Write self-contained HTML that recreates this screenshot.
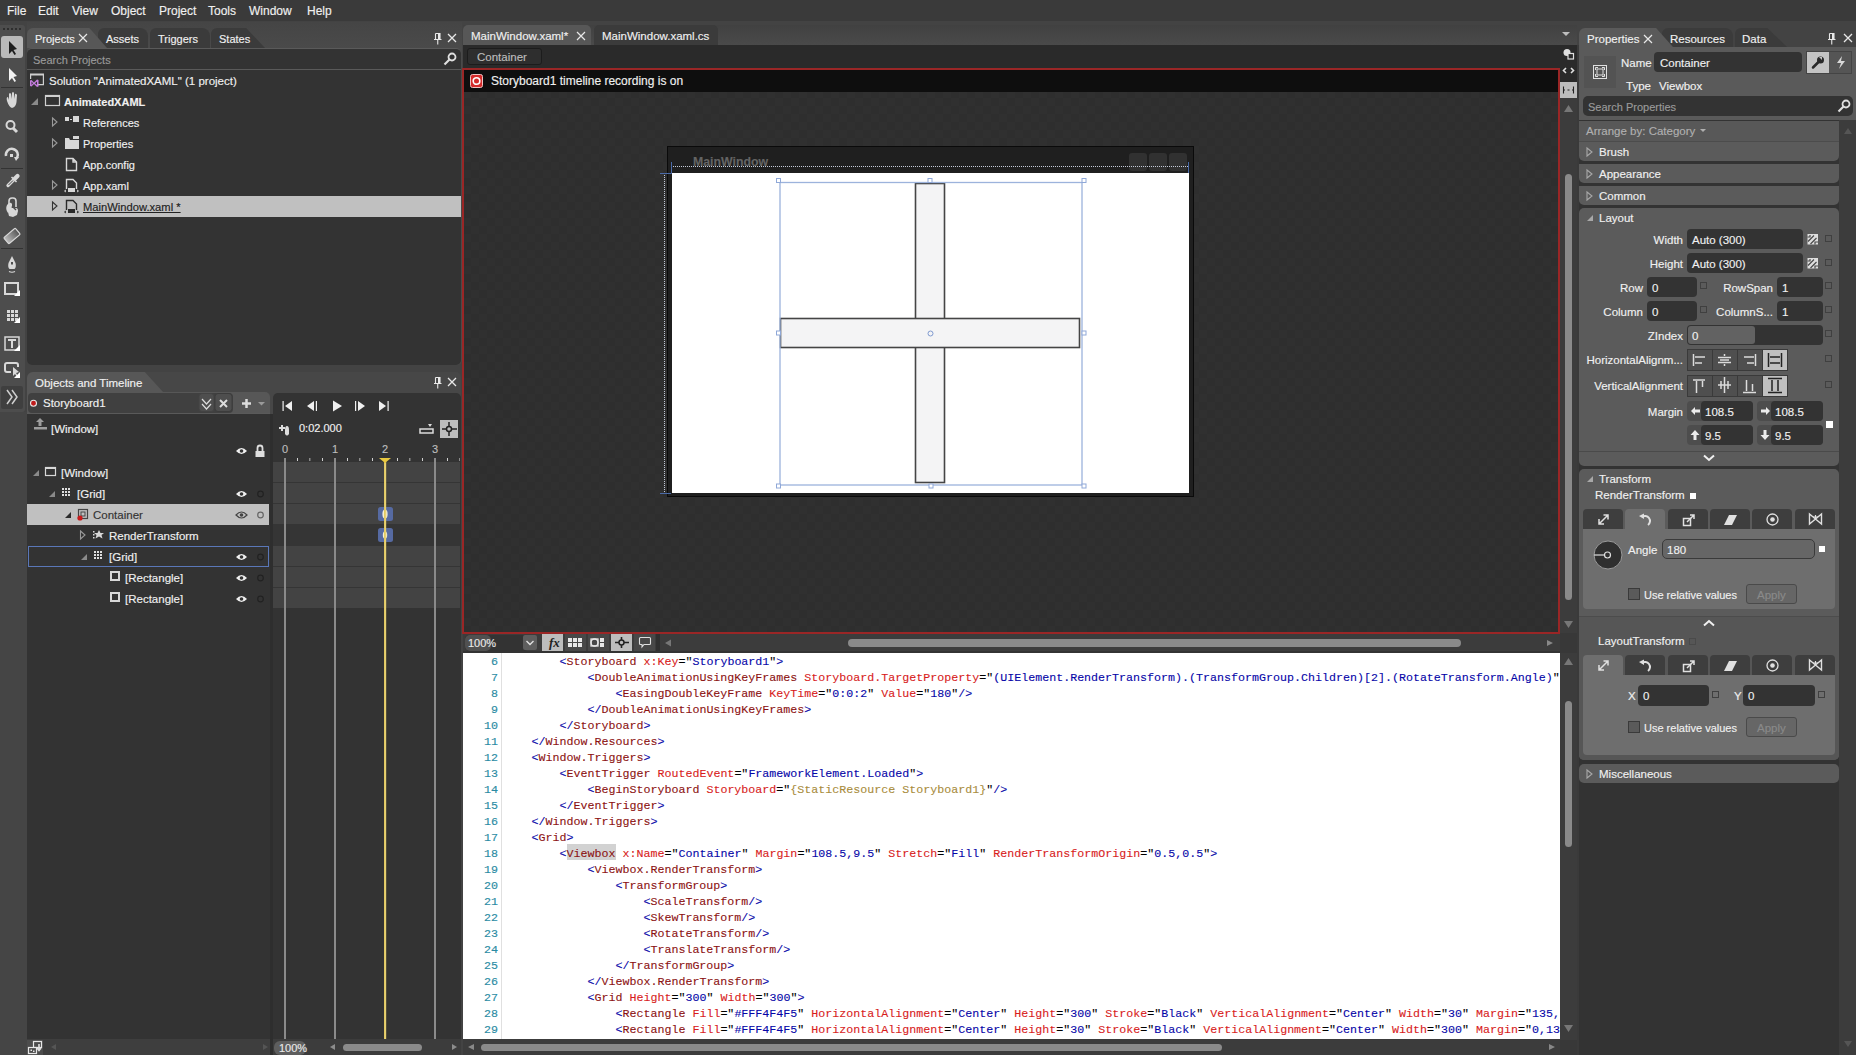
<!DOCTYPE html>
<html><head><meta charset="utf-8">
<style>
*{box-sizing:border-box;margin:0;padding:0}
html,body{width:1856px;height:1055px;overflow:hidden}
body{background:#434343;font-family:"Liberation Sans",sans-serif;font-size:11.5px;color:#f0f0f0;position:relative;-webkit-text-stroke:0.15px}
.a{position:absolute}
.t{position:absolute;white-space:nowrap;line-height:14px}
svg{position:absolute;overflow:visible}
.tab{position:absolute;height:20px;background:#3a3a3a;border-radius:6px 0 0 0}
.code{position:absolute;left:503.5px;font-family:"Liberation Mono",monospace;font-size:11.667px;line-height:16px;white-space:pre;color:#a31515;-webkit-text-stroke:0.1px}
.b{color:#0606a8}.q{color:#000}.r{color:#d81c1c}.v{color:#0000ff}.k{color:#8c1212}.y{color:#a88c3c}
.ln{position:absolute;left:463px;width:35px;text-align:right;font-family:"Liberation Mono",monospace;font-size:11.667px;line-height:16px;color:#2a8ba3;-webkit-text-stroke:0.15px}
</style></head><body>
<!-- ============ MENU ============ -->
<div class="a" style="left:0;top:0;width:1856px;height:21px;background:#3a3a3a"></div>
<div class="t" style="left:7px;top:4px;font-size:12px">File</div>
<div class="t" style="left:38px;top:4px;font-size:12px">Edit</div>
<div class="t" style="left:72px;top:4px;font-size:12px">View</div>
<div class="t" style="left:111px;top:4px;font-size:12px">Object</div>
<div class="t" style="left:159px;top:4px;font-size:12px">Project</div>
<div class="t" style="left:208px;top:4px;font-size:12px">Tools</div>
<div class="t" style="left:249px;top:4px;font-size:12px">Window</div>
<div class="t" style="left:307px;top:4px;font-size:12px">Help</div>

<!-- ============ LEFT TOOLBAR ============ -->
<div class="a" style="left:0;top:25px;width:25px;height:387px;background:#4d4d4d;border-radius:0 3px 3px 0"></div>
<div class="a" style="left:0;top:412px;width:27px;height:643px;background:#454545"></div>
<svg style="left:0;top:25px" width="25" height="387"><defs><linearGradient id="erg" x1="0" x2="1"><stop offset="0" stop-color="#bdbdbd"/><stop offset="1" stop-color="#555"/></linearGradient></defs>
 <g fill="#2e2e2e"><rect x="3" y="3" width="2" height="2"/><rect x="7" y="3" width="2" height="2"/><rect x="11" y="3" width="2" height="2"/><rect x="15" y="3" width="2" height="2"/><rect x="19" y="3" width="2" height="2"/></g>
 <rect x="1" y="11" width="22" height="22" rx="3" fill="#b9b9b9"/>
 <path d="M9 16 L9 29 L12 26 L14.5 30 L16 29 L13.5 25 L17 24 Z" fill="#1e1e1e"/>
 <path d="M9 43 L9 56 L12 53 L14.5 57 L16 56 L13.5 52 L17 51 Z" fill="#f2f2f2"/>
 <rect x="1" y="62" width="22" height="1" fill="#333"/>
 <path d="M7 76 Q6 72 8 72 L9 75 L9 69 Q10 67 11 69 L11.5 74 L12 68 Q13 66 14 68 L14 74 L15 69 Q16 68 17 70 L16.5 77 Q16 82 12 83 Q9 82 7 76Z" fill="#d8d8d8"/>
 <circle cx="10.5" cy="100" r="4" fill="none" stroke="#d8d8d8" stroke-width="2"/><path d="M13 103 L17 107" stroke="#d8d8d8" stroke-width="3"/>
 <path d="M6 131 A6 6 0 1 1 17 133" fill="none" stroke="#d8d8d8" stroke-width="2.5"/><path d="M14 132 L19 132 L16 136Z" fill="#d8d8d8"/><rect x="10" y="129" width="3" height="3" fill="#d8d8d8"/>
 <rect x="1" y="143" width="22" height="1" fill="#333"/>
 <path d="M8 160.5 L13.5 155" stroke="#d8d8d8" stroke-width="3.2" stroke-linecap="round"/><path d="M8.5 160 L13 155.5" stroke="#4d4d4d" stroke-width="1"/>
 <path d="M12.5 153 L16 149.5 Q17.5 148 19 149.5 Q20.5 151 19 152.5 L15.5 156Z" fill="#d8d8d8"/><path d="M11.5 152 L16.5 157" stroke="#d8d8d8" stroke-width="1.6"/>
<g transform="translate(0,2)"> <path d="M8 186 Q5 182 7 178 L9 176 Q11 175 12 177 L12 180" fill="#d8d8d8"/><path d="M9 180 L9 174 Q9 171 12 171 L13 171 Q16 171 16 174 L16 180" fill="none" stroke="#d8d8d8" stroke-width="1.6"/><path d="M7 181 L16 181 Q18 181 18 184 L17 188 L13 190 L9 189Z" fill="#d8d8d8"/><path d="M12 179 L16 183" stroke="#4d4d4d" stroke-width="1.4"/></g>
 <g transform="rotate(-40 12 211)"><rect x="4.5" y="207" width="15" height="8" rx="1" fill="url(#erg)" stroke="#d8d8d8" stroke-width="1.2"/></g>
 <rect x="1" y="223" width="22" height="1" fill="#333"/>
 <path d="M12 231 L15.5 238 Q16.5 242 14.5 244 L9.5 244 Q7.5 242 8.5 238Z" fill="#d8d8d8"/><rect x="11" y="237" width="2" height="2.5" fill="#4d4d4d"/><path d="M9 246.5 Q12 248 15 246.5" stroke="#d8d8d8" fill="none" stroke-width="1.2"/>
 <rect x="5" y="258" width="13" height="11" fill="none" stroke="#d8d8d8" stroke-width="2"/><path d="M20 271 L20 265 L14 271Z" fill="#fff"/>
 <g fill="#d8d8d8"><rect x="7" y="285" width="3" height="3"/><rect x="11" y="285" width="3" height="3"/><rect x="15" y="285" width="3" height="3"/><rect x="7" y="289" width="3" height="3"/><rect x="11" y="289" width="3" height="3"/><rect x="15" y="289" width="3" height="3"/><rect x="7" y="293" width="3" height="3"/><rect x="11" y="293" width="3" height="3"/><rect x="15" y="293" width="3" height="3"/></g><path d="M20 298 L20 292 L14 298Z" fill="#fff"/>
 <rect x="5" y="312" width="14" height="13" fill="none" stroke="#d8d8d8" stroke-width="1.5"/><path d="M8 315 L16 315 M12 315 L12 323" stroke="#d8d8d8" stroke-width="2"/><path d="M20 326 L20 320 L14 326Z" fill="#fff"/>
 <path d="M11 347 L7 347 Q5 347 5 345 L5 340 Q5 338 7 338 L16 338 Q18 338 18 340 L18 342" fill="none" stroke="#d8d8d8" stroke-width="2"/><path d="M13 342 L13 351 L15 349 L17 352 L18 351 L16 348 L19 347Z" fill="#d8d8d8"/><path d="M20 353 L20 347 L14 353Z" fill="#fff"/>
 <rect x="1" y="361" width="22" height="23" rx="2" fill="#3f3f3f"/>
 <path d="M7 365 L12 372 L7 379 M12 365 L17 372 L12 379" fill="none" stroke="#cfcfcf" stroke-width="1.5"/>
</svg>

<!-- ============ PROJECTS PANEL ============ -->
<div class="a" style="left:27px;top:22px;width:435px;height:343px;background:linear-gradient(#454545,#4a4a4a 26px);border-radius:0 0 5px 5px"></div>
<!-- tabs -->
<div class="a" style="left:98px;top:28px;width:50px;height:20px;background:#3b3b3b;border-radius:6px 8px 0 0"></div>
<div class="a" style="left:150px;top:28px;width:60px;height:20px;background:#3b3b3b;border-radius:6px 8px 0 0"></div>
<div class="a" style="left:211px;top:28px;width:54px;height:20px;background:#3b3b3b;border-radius:6px 0 0 0;clip-path:polygon(0 0,65% 0,100% 100%,0 100%)"></div>
<div class="a" style="left:27px;top:28px;width:80px;height:20px;background:#575757;border-radius:6px 0 0 0;clip-path:polygon(0 0,78% 0,100% 100%,0 100%)"></div>
<div class="t" style="left:35px;top:32px;font-size:11px">Projects</div>
<svg style="left:78px;top:33px" width="10" height="10"><path d="M1 1 L9 9 M9 1 L1 9" stroke="#e8e8e8" stroke-width="1.2"/></svg>
<div class="t" style="left:106px;top:32px;font-size:11px">Assets</div>
<div class="t" style="left:158px;top:32px;font-size:11px">Triggers</div>
<div class="t" style="left:219px;top:32px;font-size:11px">States</div>
<svg style="left:433px;top:32px" width="12" height="13"><path d="M2.5 1.5 L7 1.5 L7 7.5 M2.5 1.5 L2.5 7.5 M1 7.5 L8.5 7.5 M4.75 8 L4.75 12.5" fill="none" stroke="#e8e8e8" stroke-width="1.1"/><rect x="5" y="2" width="2" height="5.5" fill="#e8e8e8"/></svg>
<svg style="left:447px;top:33px" width="10" height="10"><path d="M1 1 L9 9 M9 1 L1 9" stroke="#e8e8e8" stroke-width="1.3"/></svg>
<!-- search -->
<div class="a" style="left:27px;top:48px;width:434px;height:22px;background:#333;border-top:1px solid #5a5a5a;border-bottom:1px solid #5a5a5a;border-radius:5px 5px 0 0"></div>
<div class="t" style="left:33px;top:53px;color:#9a9a9a;font-size:11px">Search Projects</div>
<svg style="left:443px;top:52px" width="14" height="14"><circle cx="9" cy="5" r="3.5" fill="none" stroke="#e0e0e0" stroke-width="1.8"/><path d="M6.5 7.5 L1.5 12.5" stroke="#e0e0e0" stroke-width="2.2"/></svg>
<!-- tree -->
<div class="a" style="left:27px;top:70px;width:434px;height:295px;background:#333;border-radius:0 0 5px 5px"></div>
<div class="a" style="left:27px;top:196px;width:434px;height:21px;background:#c0c0c0"></div>
<svg style="left:28px;top:70px" width="60" height="150">
 <rect x="2" y="3.5" width="14" height="2" fill="#cfcfcf"/><path d="M2.6 4 L2.6 9 M15.4 4 L15.4 14.6 L10 14.6" fill="none" stroke="#cfcfcf" stroke-width="1.2"/>
 <path d="M2 10.5 L3.5 10 L6 12.5 L9 9.5 L10.5 10 L10.5 16.5 L9 17 L6 14 L3.5 16.5 L2 16Z M3.5 11.5 L3.5 15 L5 13.2Z M9 11.5 L7 13.2 L9 15Z" fill="#c77ee0" fill-rule="evenodd"/>
 <path d="M3 35 L10 28 L10 35Z" fill="#8a8a8a"/>
 <rect x="17.5" y="25.5" width="14" height="10" fill="none" stroke="#d0d0d0" stroke-width="1.2"/><rect x="17" y="25" width="15" height="2" fill="#d0d0d0"/>
 <path d="M24.5 48 L29 52 L24.5 56Z" fill="none" stroke="#9a9a9a" stroke-width="1.1"/>
 <rect x="37" y="47" width="4" height="4" fill="#d8d8d8"/><rect x="42" y="49" width="2" height="1" fill="#d8d8d8"/><rect x="45" y="46" width="6" height="6" fill="#d8d8d8"/>
 <path d="M24.5 69 L29 73 L24.5 77Z" fill="none" stroke="#9a9a9a" stroke-width="1.1"/>
 <path d="M37 68 L41 68 L42 70 L51 70 L51 79 L37 79Z" fill="#d8d8d8"/><path d="M45 66 L51 66 L51 69 L45 69Z" fill="#d8d8d8"/>
 <path d="M38.5 88.5 L45 88.5 L48.5 92 L48.5 100.5 L38.5 100.5Z M45 88.5 L45 92 L48.5 92" fill="none" stroke="#d8d8d8" stroke-width="1.4"/>
 <path d="M24.5 111 L29 115 L24.5 119Z" fill="none" stroke="#9a9a9a" stroke-width="1.1"/>
 <path d="M38.5 119 L38.5 109.5 L45 109.5 L48.5 113 L48.5 119" fill="none" stroke="#d8d8d8" stroke-width="1.4"/><path d="M40 118 L47 118 L47 122 L40 122Z" fill="#d8d8d8"/><path d="M38 120 L36.5 121 L38 122 M49 120 L50.5 121 L49 122" stroke="#d8d8d8" fill="none"/>
 <path d="M24.5 132 L29 136 L24.5 140Z" fill="none" stroke="#333" stroke-width="1.1"/>
 <path d="M38.5 140 L38.5 130.5 L45 130.5 L48.5 134 L48.5 140" fill="none" stroke="#2a2a2a" stroke-width="1.4"/><path d="M40 139 L47 139 L47 143 L40 143Z" fill="#2a2a2a"/><path d="M38 141 L36.5 142 L38 143 M49 141 L50.5 142 L49 143" stroke="#2a2a2a" fill="none"/>
</svg>
<div class="t" style="left:49px;top:74px">Solution "AnimatedXAML" (1 project)</div>
<div class="t" style="left:64px;top:95px;font-weight:bold;font-size:11px">AnimatedXAML</div>
<div class="t" style="left:83px;top:116px;font-size:11px">References</div>
<div class="t" style="left:83px;top:137px;font-size:11px">Properties</div>
<div class="t" style="left:83px;top:158px;font-size:11px">App.config</div>
<div class="t" style="left:83px;top:179px;font-size:11px">App.xaml</div>
<div class="t" style="left:83px;top:200px;color:#222;text-decoration:underline;font-size:11.2px">MainWindow.xaml *</div>

<!-- ============ OBJECTS AND TIMELINE ============ -->
<div class="a" style="left:27px;top:372px;width:434px;height:683px;background:#474747;border-radius:5px 5px 0 0"></div>
<div class="a" style="left:27px;top:372px;width:137px;height:21px;background:#575757;border-radius:6px 0 0 0;clip-path:polygon(0 0,86% 0,100% 100%,0 100%)"></div>
<div class="t" style="left:35px;top:376px">Objects and Timeline</div>
<svg style="left:433px;top:376px" width="12" height="13"><path d="M2.5 1.5 L7 1.5 L7 7.5 M2.5 1.5 L2.5 7.5 M1 7.5 L8.5 7.5 M4.75 8 L4.75 12.5" fill="none" stroke="#e8e8e8" stroke-width="1.1"/><rect x="5" y="2" width="2" height="5.5" fill="#e8e8e8"/></svg>
<svg style="left:447px;top:377px" width="10" height="10"><path d="M1 1 L9 9 M9 1 L1 9" stroke="#e8e8e8" stroke-width="1.3"/></svg>
<!-- storyboard row -->
<div class="a" style="left:27px;top:392px;width:243px;height:22px;background:#575757;border-radius:0 5px 0 0"></div>
<div class="a" style="left:28px;top:393px;width:205px;height:20px;background:#404040;border-radius:4px"></div>
<svg style="left:28px;top:396px" width="242" height="16">
 <circle cx="5.5" cy="7.3" r="3" fill="#c01c1c" stroke="#e8e8e8" stroke-width="1.1"/>
 <rect x="171" y="-2.5" width="15" height="18" rx="3" fill="#4e4e4e" stroke="#434343" stroke-width="1"/>
 <path d="M174 3 L178.5 8 L183 3 M174 8 L178.5 13 L183 8" fill="none" stroke="#dcdcdc" stroke-width="1.2"/>
 <rect x="187" y="-2.5" width="17" height="18" rx="3" fill="#4e4e4e" stroke="#3c3c3c" stroke-width="1"/>
 <path d="M192 4 L199 11 M199 4 L192 11" stroke="#dcdcdc" stroke-width="2"/>
 <path d="M214 7.5 L223 7.5 M218.5 3 L218.5 12" stroke="#dcdcdc" stroke-width="2.5"/>
 <path d="M230 6 L237 6 L233.5 9.5Z" fill="#9a9a9a"/>
</svg>
<div class="t" style="left:43px;top:396px">Storyboard1</div>
<!-- tree area -->
<div class="a" style="left:27px;top:413px;width:243px;height:642px;background:#333"></div>
<div class="a" style="left:270px;top:414px;width:3px;height:641px;background:#2e2e2e"></div>
<div class="a" style="left:27px;top:413px;width:243px;height:1px;background:#5a5a5a"></div>
<div class="a" style="left:27px;top:504px;width:242px;height:21px;background:#c0c0c0"></div>
<div class="a" style="left:28px;top:546px;width:241px;height:21px;border:1px solid #5a77b8"></div>
<div class="t" style="left:51px;top:422px">[Window]</div>
<div class="t" style="left:61px;top:466px">[Window]</div>
<div class="t" style="left:77px;top:487px">[Grid]</div>
<div class="t" style="left:93px;top:508px;color:#333">Container</div>
<div class="t" style="left:109px;top:529px">RenderTransform</div>
<div class="t" style="left:109px;top:550px">[Grid]</div>
<div class="t" style="left:125px;top:571px">[Rectangle]</div>
<div class="t" style="left:125px;top:592px">[Rectangle]</div>
<svg style="left:27px;top:413px" width="243" height="200">
 <path d="M13 5 L17 9 L14.5 9 L14.5 13 L11.5 13 L11.5 9 L9 9Z" fill="#9d9d9d"/><rect x="7" y="14" width="13" height="2.5" fill="#9d9d9d"/>
 <!-- eye + lock header -->
 <path d="M209 38 Q214.5 32 220 38 Q214.5 44 209 38Z" fill="#f0f0f0"/><circle cx="214.5" cy="38" r="1.8" fill="#333"/>
 <path d="M230.5 38 L230.5 35 Q230.5 32.5 233 32.5 Q235.5 32.5 235.5 35 L235.5 38" fill="none" stroke="#dedede" stroke-width="1.8"/><rect x="228.5" y="38" width="9" height="6" fill="#dedede"/>
 <!-- Window -->
 <path d="M6 63 L12 57 L12 63Z" fill="#8a8a8a"/>
 <rect x="18.5" y="54.5" width="10" height="8" fill="none" stroke="#d8d8d8" stroke-width="1.2"/><rect x="18" y="54" width="11" height="2" fill="#d8d8d8"/>
 <!-- Grid -->
 <path d="M22 84 L28 78 L28 84Z" fill="#8a8a8a"/>
 <g fill="#e0e0e0"><rect x="35" y="75" width="2" height="2"/><rect x="38" y="75" width="2" height="2"/><rect x="41" y="75" width="2" height="2"/><rect x="35" y="78" width="2" height="2"/><rect x="38" y="78" width="2" height="2"/><rect x="41" y="78" width="2" height="2"/><rect x="35" y="81" width="2" height="2"/><rect x="38" y="81" width="2" height="2"/><rect x="41" y="81" width="2" height="2"/></g>
 <path d="M209 81 Q214.5 75 220 81 Q214.5 87 209 81Z" fill="#f0f0f0"/><circle cx="214.5" cy="81" r="1.8" fill="#333"/>
 <circle cx="233.5" cy="81" r="2.8" fill="none" stroke="#222" stroke-width="1.2"/>
 <!-- Container -->
 <path d="M38 105 L44 99 L44 105Z" fill="#2a2a2a"/>
 <rect x="51.5" y="96.5" width="9" height="9" fill="none" stroke="#444" stroke-width="1.2"/><rect x="54" y="99" width="4" height="4" fill="none" stroke="#444"/>
 <circle cx="53" cy="105" r="2.6" fill="#c81a1a"/>
 <path d="M209 102 Q214.5 96 220 102 Q214.5 108 209 102Z" fill="none" stroke="#444" stroke-width="1.2"/><circle cx="214.5" cy="102" r="1.8" fill="#444"/>
 <circle cx="233.5" cy="102" r="2.8" fill="none" stroke="#666" stroke-width="1.2"/>
 <!-- RenderTransform -->
 <path d="M53.5 118 L58 122 L53.5 126Z" fill="none" stroke="#9a9a9a" stroke-width="1.1"/>
 <path d="M72 117 L73.5 120 L77 120 L74.5 122 L75.5 125.5 L72 123.5 L68.5 125.5 L69.5 122 L67 120 L70.5 120Z" fill="#d8d8d8"/><g fill="#d8d8d8"><rect x="66" y="118" width="1.5" height="1.5"/><rect x="66" y="121" width="1.5" height="1.5"/><rect x="66" y="124" width="1.5" height="1.5"/></g>
 <!-- Grid2 -->
 <path d="M54 147 L60 141 L60 147Z" fill="#8a8a8a"/>
 <g fill="#e0e0e0"><rect x="67" y="138" width="2" height="2"/><rect x="70" y="138" width="2" height="2"/><rect x="73" y="138" width="2" height="2"/><rect x="67" y="141" width="2" height="2"/><rect x="70" y="141" width="2" height="2"/><rect x="73" y="141" width="2" height="2"/><rect x="67" y="144" width="2" height="2"/><rect x="70" y="144" width="2" height="2"/><rect x="73" y="144" width="2" height="2"/></g>
 <path d="M209 144 Q214.5 138 220 144 Q214.5 150 209 144Z" fill="#f0f0f0"/><circle cx="214.5" cy="144" r="1.8" fill="#333"/>
 <circle cx="233.5" cy="144" r="2.8" fill="none" stroke="#222" stroke-width="1.2"/>
 <!-- Rect -->
 <rect x="84" y="159" width="8" height="8" fill="none" stroke="#d8d8d8" stroke-width="2"/>
 <path d="M209 165 Q214.5 159 220 165 Q214.5 171 209 165Z" fill="#f0f0f0"/><circle cx="214.5" cy="165" r="1.8" fill="#333"/>
 <circle cx="233.5" cy="165" r="2.8" fill="none" stroke="#222" stroke-width="1.2"/>
 <rect x="84" y="180" width="8" height="8" fill="none" stroke="#d8d8d8" stroke-width="2"/>
 <path d="M209 186 Q214.5 180 220 186 Q214.5 192 209 186Z" fill="#f0f0f0"/><circle cx="214.5" cy="186" r="1.8" fill="#333"/>
 <circle cx="233.5" cy="186" r="2.8" fill="none" stroke="#222" stroke-width="1.2"/>
</svg>
<!-- timeline -->
<div class="a" style="left:273px;top:393px;width:188px;height:662px;background:#333;border-radius:5px 5px 0 0"></div>
<svg style="left:273px;top:393px" width="188" height="662">
 <rect x="9.5" y="8" width="1.2" height="10" fill="#f0f0f0"/><path d="M19 8 L12 13 L19 18Z" fill="#f0f0f0"/>
 <path d="M34 13 L41 8 L41 18Z" fill="#f0f0f0"/><rect x="42.8" y="8" width="1.2" height="10" fill="#f0f0f0"/>
 <path d="M60 7.5 L69 13 L60 18.5Z" fill="#f0f0f0"/>
 <rect x="82" y="8" width="1.2" height="10" fill="#f0f0f0"/><path d="M85 8 L92 13 L85 18Z" fill="#f0f0f0"/>
 <path d="M106 8 L113 13 L106 18Z" fill="#f0f0f0"/><rect x="114.5" y="8" width="1.2" height="10" fill="#f0f0f0"/>
 <path d="M6 35 L12 35 M9 32 L9 38" stroke="#dcdcdc" stroke-width="2"/><path d="M12 37 Q12 33 14 33 Q16 33 16 37 L16 41 Q14 44 12 41Z" fill="#dcdcdc"/>
 <rect x="147" y="36" width="13" height="4" fill="none" stroke="#dcdcdc" stroke-width="1.5"/><path d="M155 31 L159 31 L157 34Z" fill="#dcdcdc"/>
 <rect x="167" y="27" width="18" height="18" fill="#bdbdbd"/>
 <circle cx="176" cy="36" r="2.5" fill="none" stroke="#222" stroke-width="1.5"/><path d="M176 29 L176 33.5 M176 38.5 L176 43 M169 36 L173.5 36 M178.5 36 L184 36" stroke="#222" stroke-width="1.5"/>
</svg>
<div class="t" style="left:299px;top:421px;font-size:11px">0:02.000</div>
<div class="t" style="left:282px;top:442px;color:#bdbdbd;font-size:11px">0</div>
<div class="t" style="left:332px;top:442px;color:#bdbdbd;font-size:11px">1</div>
<div class="t" style="left:382px;top:442px;color:#bdbdbd;font-size:11px">2</div>
<div class="t" style="left:432px;top:442px;color:#bdbdbd;font-size:11px">3</div>
<!-- rows -->
<div class="a" style="left:273px;top:462px;width:187px;height:146px;background:repeating-linear-gradient(#434343 0 20px,#353535 20px 21px)"></div>
<div class="a" style="left:273px;top:525px;width:187px;height:21px;background:#353535"></div>
<svg style="left:273px;top:455px" width="188" height="600">
 <g fill="#d0d0d0"><rect x="24" y="3" width="1" height="3"/><rect x="49" y="3" width="1" height="3"/><rect x="74" y="3" width="1" height="3"/><rect x="99" y="3" width="1" height="3"/><rect x="124" y="3" width="1" height="3"/><rect x="149" y="3" width="1" height="3"/><rect x="174" y="3" width="1" height="3"/></g>
 <g fill="#8a8a8a"><rect x="36" y="3" width="1.5" height="3"/><rect x="86" y="3" width="1.5" height="3"/><rect x="136" y="3" width="1.5" height="3"/><rect x="186" y="3" width="1" height="3"/></g>
 <rect x="11" y="3" width="2" height="597" fill="#8a8a8a"/>
 <rect x="61" y="3" width="2" height="597" fill="#8a8a8a"/>
 <rect x="161" y="3" width="2" height="597" fill="#8a8a8a"/>
 <rect x="105" y="52" width="15" height="14" rx="2.5" fill="#566aa2"/><ellipse cx="112" cy="59" rx="2.6" ry="4.6" fill="#f4f0d8"/>
 <rect x="105" y="73" width="15" height="14" rx="2.5" fill="#566aa2"/><ellipse cx="112" cy="80" rx="2.2" ry="3.8" fill="#f4f0d8"/>
 <rect x="111" y="5" width="2.2" height="595" fill="#dcbf48"/><rect x="111.7" y="8" width="0.8" height="592" fill="#f0e2a0"/>
 <path d="M106 3 L118 3 L112 8Z" fill="#e8c840"/>
</svg>
<!-- bottom scrollbars left -->
<div class="a" style="left:27px;top:1039px;width:243px;height:16px;background:#3e3e3e"></div>
<div class="a" style="left:273px;top:1039px;width:188px;height:16px;background:#3c3c3c"></div>
<svg style="left:27px;top:1039px" width="434" height="16">
 <rect x="0" y="1" width="16" height="15" fill="#4d4d4d"/>
 <rect x="6.5" y="2.5" width="8" height="6" fill="none" stroke="#e8e8e8" stroke-width="1.2"/><rect x="1.5" y="8.5" width="8" height="6" fill="#4d4d4d" stroke="#e8e8e8" stroke-width="1.2"/><rect x="3.5" y="10.5" width="1.5" height="1.5" fill="#e8e8e8"/><rect x="6" y="11.5" width="1.5" height="1.5" fill="#e8e8e8"/><path d="M12 5 L12 11 M10 9 L12 11.5 L14 9" stroke="#e0e0e0" fill="none" stroke-width="1.6"/>
 <path d="M24 8 L29 5 L29 11Z" fill="#555"/>
 <path d="M236 5 L241 8 L236 11Z" fill="#555"/>
 <rect x="247" y="2" width="32" height="14" rx="6" fill="#5e5e5e"/>
 <path d="M303 8 L308 5 L308 11Z" fill="#8c8c8c"/>
 <rect x="316" y="5" width="79" height="7" rx="3.5" fill="#8a8a8a"/>
 <path d="M425 5 L430 8 L425 11Z" fill="#8c8c8c"/>
</svg>
<div class="t" style="left:279px;top:1041px;font-size:11px;color:#e8e8e8">100%</div>

<!-- ============ DOCUMENT AREA ============ -->
<div class="a" style="left:463px;top:25px;width:1114px;height:20px;background:linear-gradient(#414141,#4a4a4a)"></div>
<div class="a" style="left:463px;top:25px;width:128px;height:20px;background:#575757;border-radius:5px 5px 0 0"></div>
<div class="a" style="left:594px;top:25px;width:124px;height:20px;background:#3b3b3b;border-radius:5px 5px 0 0"></div>
<div class="t" style="left:471px;top:29px">MainWindow.xaml*</div>
<svg style="left:576px;top:31px" width="10" height="10"><path d="M1 1 L9 9 M9 1 L1 9" stroke="#e8e8e8" stroke-width="1.2"/></svg>
<div class="t" style="left:602px;top:29px">MainWindow.xaml.cs</div>
<svg style="left:1561px;top:31px" width="10" height="6"><path d="M1 1 L9 1 L5 5Z" fill="#bdbdbd"/></svg>
<!-- breadcrumb -->
<div class="a" style="left:463px;top:45px;width:1097px;height:23px;background:#2a2a2a"></div>
<div class="a" style="left:467px;top:48px;width:75px;height:17px;background:#2e2e2e;border:1px solid #1c1c1c;border-radius:3px"></div>
<div class="t" style="left:477px;top:50px;color:#bdbdbd">Container</div>
<!-- artboard -->
<div class="a" style="left:462px;top:68px;width:1098px;height:566px;background-color:#2e2e2e;background-image:linear-gradient(45deg,#303030 25%,transparent 25%,transparent 75%,#303030 75%),linear-gradient(45deg,#303030 25%,transparent 25%,transparent 75%,#303030 75%);background-size:16px 16px;background-position:7px 4px,15px 12px;border:2px solid #9a2626"></div>
<div class="a" style="left:464px;top:70px;width:1094px;height:22px;background:#0e0e0e"></div>
<svg style="left:470px;top:74px" width="14" height="14"><rect x="0.5" y="0.5" width="12" height="13" rx="2" fill="#d42a2a" stroke="#f0c0c0" stroke-width="1"/><circle cx="6.5" cy="7" r="3.3" fill="none" stroke="#fff" stroke-width="1.6"/></svg>
<div class="t" style="left:491px;top:74px;font-size:12px">Storyboard1 timeline recording is on</div>
<!-- mock window -->
<div class="a" style="left:667px;top:146px;width:527px;height:351px;background:#1f1f1f;border:1px solid #0a0a0a"></div>
<div class="t" style="left:693px;top:155px;color:#646464;font-weight:bold;font-size:12.3px">MainWindow</div>
<div class="a" style="left:1129px;top:153px;width:18px;height:18px;background:#313131;border-radius:3px"></div>
<div class="a" style="left:1149px;top:153px;width:18px;height:18px;background:#313131;border-radius:3px"></div>
<div class="a" style="left:1169px;top:153px;width:18px;height:18px;background:#313131;border-radius:3px"></div>
<div class="a" style="left:672px;top:173px;width:517px;height:320px;background:#fff"></div>
<svg style="left:655px;top:140px" width="560" height="370">
 <path d="M18 26.5 L534 26.5" stroke="#c4cad8" stroke-width="1" stroke-dasharray="1 1"/>
 <path d="M9.5 35 L9.5 353" stroke="#c4cad8" stroke-width="1" stroke-dasharray="1 1"/>
 <path d="M16.5 22 L16.5 33.5 L5 33.5" fill="none" stroke="#4a6aa8" stroke-width="1"/>
 <path d="M533.5 22 L533.5 33" fill="none" stroke="#4a6aa8" stroke-width="1"/>
 <path d="M5 353.5 L16 353.5" fill="none" stroke="#4a6aa8" stroke-width="1"/>
 <!-- rectangles -->
 <rect x="260.5" y="43.5" width="29" height="299" fill="#f4f4f5" stroke="#454545" stroke-width="1.6"/>
 <rect x="125.5" y="178.5" width="299" height="29" fill="#f4f4f5" stroke="#454545" stroke-width="1.6"/>
 <!-- selection -->
 <rect x="125" y="42.5" width="302" height="302.5" fill="none" stroke="#9cb3dc" stroke-width="1.3"/>
 <g fill="#fff" stroke="#8fa8d8" stroke-width="1"><rect x="121.5" y="38.5" width="4" height="4"/><rect x="273" y="38.5" width="4" height="4"/><rect x="427" y="38.5" width="4" height="4"/>
 <rect x="121.5" y="191" width="4" height="4"/><rect x="427" y="191" width="4" height="4"/>
 <rect x="121.5" y="344" width="4" height="4"/><rect x="274" y="344" width="4" height="4"/><rect x="427" y="344" width="4" height="4"/></g>
 <circle cx="275.5" cy="193.5" r="2.5" fill="none" stroke="#7f9ad0" stroke-width="1"/>
</svg>
<!-- zoom toolbar -->
<div class="a" style="left:463px;top:634px;width:1097px;height:19px;background:#3c3c3c;border-bottom:2px solid #333"></div>
<svg style="left:463px;top:634px" width="1097" height="17">
 <rect x="2" y="1" width="63" height="16" rx="4" fill="#333"/>
 <rect x="2" y="1" width="26" height="16" rx="5" fill="#505050"/>
 <rect x="60" y="1" width="14" height="15" rx="2" fill="#5e5e5e"/><path d="M63.5 7 L67 10.5 L70.5 7" fill="none" stroke="#e0e0e0" stroke-width="1.4"/>
 <rect x="79" y="0" width="21" height="17" fill="#bdbdbd"/>
 <rect x="102" y="0" width="21" height="17" fill="#484848"/>
 <rect x="125" y="0" width="21" height="17" fill="#484848"/>
 <rect x="148" y="0" width="21" height="17" fill="#bdbdbd"/>
 <rect x="171" y="0" width="21" height="17" fill="#484848"/>
 <g fill="#e8e8e8"><rect x="105" y="4" width="4" height="4"/><rect x="110" y="4" width="4" height="4"/><rect x="115" y="4" width="4" height="4"/><rect x="105" y="9" width="4" height="4"/><rect x="110" y="9" width="4" height="4"/><rect x="115" y="9" width="4" height="4"/></g>
 <g fill="none" stroke="#e8e8e8" stroke-width="1.3"><circle cx="131.5" cy="8.5" r="3.5"/><rect x="128" y="5" width="7" height="7"/></g><g fill="#e8e8e8"><rect x="137" y="4" width="4" height="4"/><rect x="137" y="9" width="4" height="4"/></g>
 <circle cx="158.5" cy="8.5" r="2.5" fill="none" stroke="#222" stroke-width="1.5"/><path d="M158.5 3 L158.5 6 M158.5 11 L158.5 14 M152 8.5 L156 8.5 M161 8.5 L166 8.5" stroke="#222" stroke-width="1.6"/>
 <path d="M177.5 3.5 L186.5 3.5 Q187.5 3.5 187.5 4.5 L187.5 9.5 Q187.5 10.5 186.5 10.5 L181 10.5 L179 13 L179 10.5 L177.5 10.5 Q176.5 10.5 176.5 9.5 L176.5 4.5 Q176.5 3.5 177.5 3.5Z" fill="none" stroke="#e0e0e0" stroke-width="1.1"/><rect x="193" y="0" width="4" height="17" fill="#303030"/>
 <text x="86" y="13" font-family="Liberation Serif" font-style="italic" font-weight="bold" font-size="13" fill="#222">fx</text>
 <path d="M202 9 L208 5.5 L208 12.5Z" fill="#777"/>
 <rect x="385" y="5" width="613" height="8" rx="4" fill="#8a8a8a"/>
 <path d="M1084 6 L1090 9 L1084 12Z" fill="#888"/>
</svg>
<div class="t" style="left:468px;top:636px;font-size:11px;color:#e8e8e8">100%</div>
<!-- code editor -->
<div class="a" style="left:463px;top:653px;width:1097px;height:386px;background:#fff;overflow:hidden"></div>
<div class="a" style="left:501px;top:653px;width:1px;height:386px;background:#e0e0e0"></div>
<div class="a" style="left:567px;top:844px;width:49px;height:16px;background:#d2d2d2"></div>
<div class="a" style="left:463px;top:653px;width:1097px;height:386px;overflow:hidden">
<div style="position:absolute;left:-463px;top:-653px;width:1560px;height:1039px">
<div class="ln" style="top:654px">6</div>
<div class="code" style="top:654px">        <span class="b">&lt;</span><span class="k">Storyboard</span> <span class="r">x:Key</span><span class="q">=&quot;</span><span class="b">Storyboard1</span><span class="q">&quot;</span><span class="b">&gt;</span></div>
<div class="ln" style="top:670px">7</div>
<div class="code" style="top:670px">            <span class="b">&lt;</span><span class="k">DoubleAnimationUsingKeyFrames</span> <span class="r">Storyboard.TargetProperty</span><span class="q">=&quot;</span><span class="b">(UIElement.RenderTransform).(TransformGroup.Children)[2].(RotateTransform.Angle)</span><span class="q">&quot;</span> <span class="r">Storyboard.TargetName</span><span class="q">=&quot;</span><span class="b">Container</span><span class="q">&quot;</span><span class="b">&gt;</span></div>
<div class="ln" style="top:686px">8</div>
<div class="code" style="top:686px">                <span class="b">&lt;</span><span class="k">EasingDoubleKeyFrame</span> <span class="r">KeyTime</span><span class="q">=&quot;</span><span class="b">0:0:2</span><span class="q">&quot;</span> <span class="r">Value</span><span class="q">=&quot;</span><span class="b">180</span><span class="q">&quot;</span><span class="b">/&gt;</span></div>
<div class="ln" style="top:702px">9</div>
<div class="code" style="top:702px">            <span class="b">&lt;/</span><span class="k">DoubleAnimationUsingKeyFrames</span><span class="b">&gt;</span></div>
<div class="ln" style="top:718px">10</div>
<div class="code" style="top:718px">        <span class="b">&lt;/</span><span class="k">Storyboard</span><span class="b">&gt;</span></div>
<div class="ln" style="top:734px">11</div>
<div class="code" style="top:734px">    <span class="b">&lt;/</span><span class="k">Window.Resources</span><span class="b">&gt;</span></div>
<div class="ln" style="top:750px">12</div>
<div class="code" style="top:750px">    <span class="b">&lt;</span><span class="k">Window.Triggers</span><span class="b">&gt;</span></div>
<div class="ln" style="top:766px">13</div>
<div class="code" style="top:766px">        <span class="b">&lt;</span><span class="k">EventTrigger</span> <span class="r">RoutedEvent</span><span class="q">=&quot;</span><span class="b">FrameworkElement.Loaded</span><span class="q">&quot;</span><span class="b">&gt;</span></div>
<div class="ln" style="top:782px">14</div>
<div class="code" style="top:782px">            <span class="b">&lt;</span><span class="k">BeginStoryboard</span> <span class="r">Storyboard</span><span class="q">=&quot;</span><span class="y">{StaticResource Storyboard1}</span><span class="q">&quot;</span><span class="b">/&gt;</span></div>
<div class="ln" style="top:798px">15</div>
<div class="code" style="top:798px">        <span class="b">&lt;/</span><span class="k">EventTrigger</span><span class="b">&gt;</span></div>
<div class="ln" style="top:814px">16</div>
<div class="code" style="top:814px">    <span class="b">&lt;/</span><span class="k">Window.Triggers</span><span class="b">&gt;</span></div>
<div class="ln" style="top:830px">17</div>
<div class="code" style="top:830px">    <span class="b">&lt;</span><span class="k">Grid</span><span class="b">&gt;</span></div>
<div class="ln" style="top:846px">18</div>
<div class="code" style="top:846px">        <span class="b">&lt;</span><span class="k">Viewbox</span> <span class="r">x:Name</span><span class="q">=&quot;</span><span class="b">Container</span><span class="q">&quot;</span> <span class="r">Margin</span><span class="q">=&quot;</span><span class="b">108.5,9.5</span><span class="q">&quot;</span> <span class="r">Stretch</span><span class="q">=&quot;</span><span class="b">Fill</span><span class="q">&quot;</span> <span class="r">RenderTransformOrigin</span><span class="q">=&quot;</span><span class="b">0.5,0.5</span><span class="q">&quot;</span><span class="b">&gt;</span></div>
<div class="ln" style="top:862px">19</div>
<div class="code" style="top:862px">            <span class="b">&lt;</span><span class="k">Viewbox.RenderTransform</span><span class="b">&gt;</span></div>
<div class="ln" style="top:878px">20</div>
<div class="code" style="top:878px">                <span class="b">&lt;</span><span class="k">TransformGroup</span><span class="b">&gt;</span></div>
<div class="ln" style="top:894px">21</div>
<div class="code" style="top:894px">                    <span class="b">&lt;</span><span class="k">ScaleTransform</span><span class="b">/&gt;</span></div>
<div class="ln" style="top:910px">22</div>
<div class="code" style="top:910px">                    <span class="b">&lt;</span><span class="k">SkewTransform</span><span class="b">/&gt;</span></div>
<div class="ln" style="top:926px">23</div>
<div class="code" style="top:926px">                    <span class="b">&lt;</span><span class="k">RotateTransform</span><span class="b">/&gt;</span></div>
<div class="ln" style="top:942px">24</div>
<div class="code" style="top:942px">                    <span class="b">&lt;</span><span class="k">TranslateTransform</span><span class="b">/&gt;</span></div>
<div class="ln" style="top:958px">25</div>
<div class="code" style="top:958px">                <span class="b">&lt;/</span><span class="k">TransformGroup</span><span class="b">&gt;</span></div>
<div class="ln" style="top:974px">26</div>
<div class="code" style="top:974px">            <span class="b">&lt;/</span><span class="k">Viewbox.RenderTransform</span><span class="b">&gt;</span></div>
<div class="ln" style="top:990px">27</div>
<div class="code" style="top:990px">            <span class="b">&lt;</span><span class="k">Grid</span> <span class="r">Height</span><span class="q">=&quot;</span><span class="b">300</span><span class="q">&quot;</span> <span class="r">Width</span><span class="q">=&quot;</span><span class="b">300</span><span class="q">&quot;</span><span class="b">&gt;</span></div>
<div class="ln" style="top:1006px">28</div>
<div class="code" style="top:1006px">                <span class="b">&lt;</span><span class="k">Rectangle</span> <span class="r">Fill</span><span class="q">=&quot;</span><span class="b">#FFF4F4F5</span><span class="q">&quot;</span> <span class="r">HorizontalAlignment</span><span class="q">=&quot;</span><span class="b">Center</span><span class="q">&quot;</span> <span class="r">Height</span><span class="q">=&quot;</span><span class="b">300</span><span class="q">&quot;</span> <span class="r">Stroke</span><span class="q">=&quot;</span><span class="b">Black</span><span class="q">&quot;</span> <span class="r">VerticalAlignment</span><span class="q">=&quot;</span><span class="b">Center</span><span class="q">&quot;</span> <span class="r">Width</span><span class="q">=&quot;</span><span class="b">30</span><span class="q">&quot;</span> <span class="r">Margin</span><span class="q">=&quot;</span><span class="b">135,0</span><span class="q">&quot;</span><span class="b">/&gt;</span></div>
<div class="ln" style="top:1022px">29</div>
<div class="code" style="top:1022px">                <span class="b">&lt;</span><span class="k">Rectangle</span> <span class="r">Fill</span><span class="q">=&quot;</span><span class="b">#FFF4F4F5</span><span class="q">&quot;</span> <span class="r">HorizontalAlignment</span><span class="q">=&quot;</span><span class="b">Center</span><span class="q">&quot;</span> <span class="r">Height</span><span class="q">=&quot;</span><span class="b">30</span><span class="q">&quot;</span> <span class="r">Stroke</span><span class="q">=&quot;</span><span class="b">Black</span><span class="q">&quot;</span> <span class="r">VerticalAlignment</span><span class="q">=&quot;</span><span class="b">Center</span><span class="q">&quot;</span> <span class="r">Width</span><span class="q">=&quot;</span><span class="b">300</span><span class="q">&quot;</span> <span class="r">Margin</span><span class="q">=&quot;</span><span class="b">0,135</span><span class="q">&quot;</span><span class="b">/&gt;</span></div>
</div></div>
<!-- code h-scrollbar -->
<div class="a" style="left:463px;top:1039px;width:1097px;height:16px;background:#3c3c3c"></div>
<svg style="left:463px;top:1039px" width="1097" height="16"><path d="M5 8 L11 5 L11 11Z" fill="#888"/><rect x="18" y="5" width="741" height="7" rx="3.5" fill="#8a8a8a"/><path d="M1086 5 L1092 8 L1086 11Z" fill="#888"/></svg>
<!-- right vertical strip -->
<div class="a" style="left:1560px;top:45px;width:17px;height:1010px;background:#3c3c3c"></div>
<div class="a" style="left:1560px;top:45px;width:17px;height:37px;background:#2a2a2a"></div>
<div class="a" style="left:1560px;top:82px;width:17px;height:16px;background:#bdbdbd"></div>
<svg style="left:1560px;top:45px" width="17" height="1010">
 <circle cx="7" cy="7.5" r="3.5" fill="#e0e0e0"/><rect x="8" y="8.5" width="5.5" height="5.5" fill="#2a2a2a" stroke="#e0e0e0" stroke-width="1.2"/>
 <path d="M6 23 L3.5 25.5 L6 28 M11 23 L13.5 25.5 L11 28" fill="none" stroke="#e0e0e0" stroke-width="1.6"/>
 <path d="M3.5 41.5 L3.5 48.5 M13.5 41.5 L13.5 48.5 M3.5 45 L5 45 M7.5 45 L9.5 45 M12 45 L13.5 45" stroke="#222" stroke-width="1.1"/>
 <path d="M4 67 L8.5 60 L13 67Z" fill="#777"/>
 <rect x="5" y="129" width="7" height="426" rx="3.5" fill="#8a8a8a"/>
 <path d="M4 576 L8.5 583 L13 576Z" fill="#777"/>
 <rect x="0" y="588" width="17" height="20" fill="#383838"/>
 <path d="M4 620 L8.5 613 L13 620Z" fill="#777"/>
 <rect x="5" y="656" width="7" height="146" rx="3.5" fill="#8a8a8a"/>
 <path d="M4 980 L8.5 987 L13 980Z" fill="#777"/>
 <rect x="0" y="995" width="17" height="15" fill="#383838"/>
</svg>
<div class="a" style="left:1577px;top:45px;width:2px;height:1010px;background:#3a3a3a"></div>
<!-- ============ PROPERTIES ============ -->
<div class="a" style="left:1579px;top:47px;width:277px;height:73px;background:#5a5a5a"></div>
<div class="a" style="left:1579px;top:120px;width:277px;height:935px;background:#333"></div>
<div class="a" style="left:1662px;top:28px;width:71px;height:19px;background:#3b3b3b;border-radius:6px 8px 0 0"></div>
<div class="a" style="left:1735px;top:28px;width:52px;height:19px;background:#3b3b3b;border-radius:6px 0 0 0;clip-path:polygon(0 0,62% 0,100% 100%,0 100%)"></div>
<div class="a" style="left:1579px;top:28px;width:94px;height:19px;background:#5a5a5a;border-radius:6px 0 0 0;clip-path:polygon(0 0,82% 0,100% 100%,0 100%)"></div>
<div class="t" style="left:1587px;top:32px;">Properties</div>
<svg style="left:1643px;top:34px" width="10" height="10"><path d="M1 1 L9 9 M9 1 L1 9" stroke="#e8e8e8" stroke-width="1.2"/></svg>
<div class="t" style="left:1670px;top:32px;">Resources</div>
<div class="t" style="left:1742px;top:32px;">Data</div>
<svg style="left:1827px;top:32px" width="12" height="13"><path d="M2.5 1.5 L7 1.5 L7 7.5 M2.5 1.5 L2.5 7.5 M1 7.5 L8.5 7.5 M4.75 8 L4.75 12.5" fill="none" stroke="#e8e8e8" stroke-width="1.1"/><rect x="5" y="2" width="2" height="5.5" fill="#e8e8e8"/></svg>
<svg style="left:1843px;top:33px" width="10" height="10"><path d="M1 1 L9 9 M9 1 L1 9" stroke="#e8e8e8" stroke-width="1.3"/></svg>
<div class="a" style="left:1584px;top:56px;width:32px;height:32px;background:#535353"></div>
<svg style="left:1593px;top:65px" width="14" height="14"><rect x="0.5" y="0.5" width="13" height="13" fill="none" stroke="#e0e0e0"/><rect x="4" y="4" width="6" height="6" fill="none" stroke="#e0e0e0"/><path d="M2.5 5 L2.5 2.5 L5 2.5 M9 2.5 L11.5 2.5 L11.5 5 M11.5 9 L11.5 11.5 L9 11.5 M5 11.5 L2.5 11.5 L2.5 9" fill="none" stroke="#e0e0e0"/></svg>
<div class="t" style="left:1621px;top:56px;">Name</div>
<div class="a" style="left:1654px;top:52px;width:148px;height:20px;background:#333;border-radius:4px"></div>
<div class="t" style="left:1660px;top:56px;">Container</div>
<div class="a" style="left:1806px;top:51px;width:46px;height:23px;border:1px solid #444;background:#555"></div>
<div class="a" style="left:1807px;top:52px;width:22px;height:21px;background:#c4c4c4"></div>
<svg style="left:1810px;top:55px" width="16" height="16"><circle cx="10.5" cy="5" r="3.5" fill="#2a2a2a"/><path d="M9 2 L12 2 L12 5Z" fill="#c4c4c4"/><path d="M8.5 7 L3 12.5" stroke="#2a2a2a" stroke-width="2.5" stroke-linecap="round"/></svg>
<svg style="left:1834px;top:55px" width="14" height="16"><path d="M8 1 L3 8 L7 8 L5 14 L11 6 L7 6Z" fill="#d8d8d8"/></svg>
<div class="t" style="left:1626px;top:79px;">Type</div>
<div class="t" style="left:1659px;top:79px;">Viewbox</div>
<div class="a" style="left:1583px;top:96px;width:270px;height:20px;background:#333;border-radius:5px"></div>
<div class="t" style="left:1588px;top:100px;color:#9a9a9a;font-size:11px">Search Properties</div>
<svg style="left:1837px;top:99px" width="14" height="14"><circle cx="9" cy="5" r="3.5" fill="none" stroke="#e0e0e0" stroke-width="1.8"/><path d="M6.5 7.5 L1.5 12.5" stroke="#e0e0e0" stroke-width="2.2"/></svg>
<div class="a" style="left:1839px;top:120px;width:17px;height:935px;background:#3c3c3c"></div>
<svg style="left:1839px;top:120px" width="17" height="935"><path d="M5 14 L9 8 L13 14Z" fill="#555"/><path d="M5 921 L9 927 L13 921Z" fill="#555"/></svg>
<div class="a" style="left:1579px;top:121px;width:260px;height:21px;background:#585858;border-bottom:1px solid #4c4c4c"></div>
<div class="t" style="left:1586px;top:124px;color:#b0b0b0">Arrange by: Category</div>
<svg style="left:1699px;top:128px" width="8" height="6"><path d="M1 1 L7 1 L4 4Z" fill="#b0b0b0"/></svg>
<div class="a" style="left:1579px;top:142px;width:260px;height:19px;background:#5b5b5b;border-radius:0 0 5px 5px"></div>
<svg style="left:1586px;top:147px" width="8" height="10"><path d="M1 1 L6 5 L1 9Z" fill="none" stroke="#a8a8a8" stroke-width="1.1"/></svg>
<div class="t" style="left:1599px;top:145px;">Brush</div>
<div class="a" style="left:1579px;top:164px;width:260px;height:19px;background:#5b5b5b;border-radius:0 0 5px 5px"></div>
<svg style="left:1586px;top:169px" width="8" height="10"><path d="M1 1 L6 5 L1 9Z" fill="none" stroke="#a8a8a8" stroke-width="1.1"/></svg>
<div class="t" style="left:1599px;top:167px;">Appearance</div>
<div class="a" style="left:1579px;top:186px;width:260px;height:19px;background:#5b5b5b;border-radius:0 0 5px 5px"></div>
<svg style="left:1586px;top:191px" width="8" height="10"><path d="M1 1 L6 5 L1 9Z" fill="none" stroke="#a8a8a8" stroke-width="1.1"/></svg>
<div class="t" style="left:1599px;top:189px;">Common</div>
<div class="a" style="left:1579px;top:208px;width:260px;height:258px;background:#5b5b5b;border-radius:5px"></div>
<svg style="left:1586px;top:214px" width="8" height="8"><path d="M7 1 L7 7 L1 7Z" fill="#a8a8a8"/></svg>
<div class="t" style="left:1599px;top:211px;">Layout</div>
<div class="t" style="right:173px;top:233px;">Width</div>
<div class="a" style="left:1687px;top:229px;width:116px;height:20px;background:#333;border-radius:4px"></div>
<div class="t" style="left:1692px;top:233px;">Auto (300)</div>
<div class="t" style="right:173px;top:257px;">Height</div>
<div class="a" style="left:1687px;top:253px;width:116px;height:20px;background:#333;border-radius:4px"></div>
<div class="t" style="left:1692px;top:257px;">Auto (300)</div>
<svg style="left:1806px;top:234px" width="13" height="11"><rect x="1.5" y="0" width="10.5" height="10.5" fill="#dedede"/><path d="M2 7.5 L8 1.5 M4.5 10 L10.5 4 M1.5 3 L4 3 L4 1 M9 10.5 L9 8 L12 8" stroke="#4a4a4a" stroke-width="1.2" fill="none"/></svg>
<div class="a" style="left:1825px;top:235px;width:7px;height:7px;background:none;border:1px solid #404040"></div>
<svg style="left:1806px;top:258px" width="13" height="11"><rect x="1.5" y="0" width="10.5" height="10.5" fill="#dedede"/><path d="M2 7.5 L8 1.5 M4.5 10 L10.5 4 M1.5 3 L4 3 L4 1 M9 10.5 L9 8 L12 8" stroke="#4a4a4a" stroke-width="1.2" fill="none"/></svg>
<div class="a" style="left:1825px;top:259px;width:7px;height:7px;background:none;border:1px solid #404040"></div>
<div class="t" style="right:213px;top:281px;">Row</div>
<div class="a" style="left:1647px;top:277px;width:50px;height:20px;background:#333;border-radius:4px"></div>
<div class="t" style="left:1652px;top:281px;">0</div>
<div class="a" style="left:1700px;top:282px;width:7px;height:7px;background:none;border:1px solid #404040"></div>
<div class="t" style="right:83px;top:281px;">RowSpan</div>
<div class="a" style="left:1777px;top:277px;width:46px;height:20px;background:#333;border-radius:4px"></div>
<div class="t" style="left:1782px;top:281px;">1</div>
<div class="a" style="left:1825px;top:282px;width:7px;height:7px;background:none;border:1px solid #404040"></div>
<div class="t" style="right:213px;top:305px;">Column</div>
<div class="a" style="left:1647px;top:301px;width:50px;height:20px;background:#333;border-radius:4px"></div>
<div class="t" style="left:1652px;top:305px;">0</div>
<div class="a" style="left:1700px;top:306px;width:7px;height:7px;background:none;border:1px solid #404040"></div>
<div class="t" style="right:83px;top:305px;">ColumnS...</div>
<div class="a" style="left:1777px;top:301px;width:46px;height:20px;background:#333;border-radius:4px"></div>
<div class="t" style="left:1782px;top:305px;">1</div>
<div class="a" style="left:1825px;top:306px;width:7px;height:7px;background:none;border:1px solid #404040"></div>
<div class="t" style="right:173px;top:329px;">ZIndex</div>
<div class="a" style="left:1687px;top:325px;width:136px;height:20px;background:#333;border-radius:4px"></div>
<div class="a" style="left:1688px;top:326px;width:67px;height:18px;background:#626262;border-radius:3px"></div>
<div class="t" style="left:1692px;top:329px;">0</div>
<div class="a" style="left:1825px;top:330px;width:7px;height:7px;background:none;border:1px solid #404040"></div>
<div class="t" style="right:173px;top:353px;">HorizontalAlignm...</div>
<div class="t" style="right:173px;top:379px;">VerticalAlignment</div>
<div class="a" style="left:1687px;top:349px;width:101px;height:22px;background:#3a3a3a"></div>
<div class="a" style="left:1688px;top:350px;width:24px;height:20px;background:#4f4f4f"></div>
<div class="a" style="left:1713px;top:350px;width:24px;height:20px;background:#4f4f4f"></div>
<div class="a" style="left:1738px;top:350px;width:24px;height:20px;background:#4f4f4f"></div>
<div class="a" style="left:1763px;top:350px;width:24px;height:20px;background:#c0c0c0"></div>
<div class="a" style="left:1825px;top:355px;width:7px;height:7px;background:none;border:1px solid #404040"></div>
<div class="a" style="left:1687px;top:375px;width:101px;height:22px;background:#3a3a3a"></div>
<div class="a" style="left:1688px;top:376px;width:24px;height:20px;background:#4f4f4f"></div>
<div class="a" style="left:1713px;top:376px;width:24px;height:20px;background:#4f4f4f"></div>
<div class="a" style="left:1738px;top:376px;width:24px;height:20px;background:#4f4f4f"></div>
<div class="a" style="left:1763px;top:376px;width:24px;height:20px;background:#c0c0c0"></div>
<div class="a" style="left:1825px;top:381px;width:7px;height:7px;background:none;border:1px solid #404040"></div>
<svg style="left:1687px;top:349px" width="101" height="48">
 <g stroke="#dcdcdc" stroke-width="1.5" fill="none"><path d="M6.5 5 L6.5 17 M8 8 L18 8 M8 14 L15 14"/><path d="M37.5 5 L37.5 7 M37.5 15 L37.5 17 M31 8.5 L44 8.5 M33 11 L42 11 M31 13.5 L44 13.5"/><path d="M68.5 5 L68.5 17 M57 8 L67 8 M60 14 L67 14"/></g>
 <g stroke="#222" stroke-width="1.5" fill="none"><path d="M81.5 4 L81.5 18 M94.5 4 L94.5 18 M83 8 L93 8 M83 14 L93 14"/></g>
 <g stroke="#dcdcdc" stroke-width="1.5" fill="none"><path d="M6 31 L18 31 M9.5 32 L9.5 44 M15.5 32 L15.5 38"/><path d="M37.5 28 L37.5 44 M34 32 L34 40 M41 32 L41 40 M31 36 L44 36"/><path d="M56 43.5 L69 43.5 M59.5 31 L59.5 42 M65.5 35 L65.5 42"/></g>
 <g stroke="#222" stroke-width="1.5" fill="none"><path d="M81 29.5 L95 29.5 M81 43.5 L95 43.5 M85 31 L85 42 M91 31 L91 42"/></g>
</svg>
<div class="t" style="right:173px;top:405px;">Margin</div>
<div class="a" style="left:1687px;top:401px;width:66px;height:20px;background:#4d4d4d;border-radius:4px"></div>
<div class="a" style="left:1701px;top:401px;width:52px;height:20px;background:#333;border-radius:4px"></div>
<div class="t" style="left:1705px;top:405px;">108.5</div>
<svg style="left:1690px;top:406px" width="11" height="11"><path d="M1 5 L5 1 L5 3.5 L10 3.5 L10 6.5 L5 6.5 L5 9Z" fill="#ececec"/></svg>
<div class="a" style="left:1757px;top:401px;width:66px;height:20px;background:#4d4d4d;border-radius:4px"></div>
<div class="a" style="left:1771px;top:401px;width:52px;height:20px;background:#333;border-radius:4px"></div>
<div class="t" style="left:1775px;top:405px;">108.5</div>
<svg style="left:1760px;top:406px" width="11" height="11"><path d="M10 5 L6 1 L6 3.5 L1 3.5 L1 6.5 L6 6.5 L6 9Z" fill="#ececec"/></svg>
<div class="a" style="left:1687px;top:425px;width:66px;height:20px;background:#4d4d4d;border-radius:4px"></div>
<div class="a" style="left:1701px;top:425px;width:52px;height:20px;background:#333;border-radius:4px"></div>
<div class="t" style="left:1705px;top:429px;">9.5</div>
<svg style="left:1690px;top:430px" width="11" height="11"><path d="M5 0 L9.5 5 L6.5 5 L6.5 10 L3.5 10 L3.5 5 L0.5 5Z" fill="#ececec"/></svg>
<div class="a" style="left:1757px;top:425px;width:66px;height:20px;background:#4d4d4d;border-radius:4px"></div>
<div class="a" style="left:1771px;top:425px;width:52px;height:20px;background:#333;border-radius:4px"></div>
<div class="t" style="left:1775px;top:429px;">9.5</div>
<svg style="left:1760px;top:430px" width="11" height="11"><path d="M5 10 L9.5 5 L6.5 5 L6.5 0 L3.5 0 L3.5 5 L0.5 5Z" fill="#ececec"/></svg>
<div class="a" style="left:1826px;top:421px;width:7px;height:7px;background:#fff"></div>
<div class="a" style="left:1579px;top:451px;width:260px;height:1px;background:#4a4a4a"></div>
<svg style="left:1703px;top:454px" width="12" height="8"><path d="M1 1.5 L6 6 L11 1.5" fill="none" stroke="#f0f0f0" stroke-width="2"/></svg>
<div class="a" style="left:1579px;top:469px;width:260px;height:291px;background:#5b5b5b;border-radius:5px"></div>
<div class="a" style="left:1579px;top:616px;width:260px;height:144px;background:#565656;border-top:1px solid #4c4c4c;border-radius:0 0 5px 5px"></div>
<svg style="left:1586px;top:475px" width="8" height="8"><path d="M7 1 L7 7 L1 7Z" fill="#a8a8a8"/></svg>
<div class="t" style="left:1599px;top:472px;">Transform</div>
<div class="t" style="left:1595px;top:488px;">RenderTransform</div>
<div class="a" style="left:1690px;top:493px;width:6px;height:6px;background:#fff"></div>
<div class="a" style="left:1583px;top:509px;width:40px;height:20px;background:#3e3e3e;border-radius:4px 4px 0 0"></div>
<div class="a" style="left:1625px;top:509px;width:40px;height:20px;background:#6e6e6e;border-radius:4px 4px 0 0"></div>
<div class="a" style="left:1668px;top:509px;width:40px;height:20px;background:#3e3e3e;border-radius:4px 4px 0 0"></div>
<div class="a" style="left:1710px;top:509px;width:40px;height:20px;background:#3e3e3e;border-radius:4px 4px 0 0"></div>
<div class="a" style="left:1752px;top:509px;width:40px;height:20px;background:#3e3e3e;border-radius:4px 4px 0 0"></div>
<div class="a" style="left:1795px;top:509px;width:40px;height:20px;background:#3e3e3e;border-radius:4px 4px 0 0"></div>
<svg style="left:1596px;top:512px" width="15" height="15"><path d="M3.5 11.5 L11.5 3.5 M3 7 L3 12 L8 12 M7.5 3 L12 3 L12 7.5" fill="none" stroke="#e0e0e0" stroke-width="1.5"/></svg>
<svg style="left:1638px;top:512px" width="15" height="15"><path d="M4 5 A5 5 0 1 1 10 13" fill="none" stroke="#e0e0e0" stroke-width="2"/><path d="M1 4 L6 1.5 L6 7Z" fill="#e0e0e0"/></svg>
<svg style="left:1681px;top:512px" width="15" height="15"><rect x="2.5" y="6.5" width="7" height="7" fill="none" stroke="#e0e0e0" stroke-width="1.5"/><path d="M6 10 L13 3 M9 3 L13 3 L13 7" fill="none" stroke="#e0e0e0" stroke-width="1.5"/></svg>
<svg style="left:1723px;top:512px" width="15" height="15"><path d="M1 13 L6 3 L14 3 L9 13Z" fill="#e0e0e0"/></svg>
<svg style="left:1765px;top:512px" width="15" height="15"><circle cx="7.5" cy="7.5" r="5.5" fill="none" stroke="#e0e0e0" stroke-width="1.3"/><circle cx="7.5" cy="7.5" r="2.3" fill="#e0e0e0"/></svg>
<svg style="left:1808px;top:512px" width="15" height="15"><path d="M1.5 2 L1.5 12 L13.5 2 L13.5 12Z" fill="none" stroke="#e0e0e0" stroke-width="1.4"/><path d="M7.5 3 L7.5 8 M5 5 L10 5" stroke="#e0e0e0" stroke-width="1.2"/></svg>
<div class="a" style="left:1583px;top:529px;width:252px;height:80px;background:#6e6e6e;border-radius:0 0 4px 4px"></div>
<svg style="left:1592px;top:539px" width="32" height="32"><circle cx="16" cy="16" r="14" fill="#2f2f2f" stroke="#9a9a9a" stroke-width="1"/><path d="M2 16 L12.5 16" stroke="#e0e0e0" stroke-width="1.2"/><circle cx="15.5" cy="16" r="3" fill="none" stroke="#e0e0e0" stroke-width="1.2"/></svg>
<div class="t" style="left:1628px;top:543px;">Angle</div>
<div class="a" style="left:1662px;top:539px;width:153px;height:20px;background:#666;border:1px solid #3a3a3a;border-radius:5px"></div>
<div class="t" style="left:1667px;top:543px;">180</div>
<div class="a" style="left:1819px;top:546px;width:6px;height:6px;background:#fff"></div>
<div class="a" style="left:1628px;top:588px;width:12px;height:12px;background:#5a5a5a;border:1px solid #3a3a3a"></div>
<div class="t" style="left:1644px;top:588px;font-size:11px">Use relative values</div>
<div class="a" style="left:1746px;top:584px;width:51px;height:20px;background:#666;border:1px solid #4a4a4a;border-radius:3px"></div>
<div class="t" style="left:1757px;top:588px;color:#8a8a8a">Apply</div>
<svg style="left:1703px;top:619px" width="12" height="8"><path d="M1 6.5 L6 2 L11 6.5" fill="none" stroke="#f0f0f0" stroke-width="2"/></svg>
<div class="t" style="left:1598px;top:634px;">LayoutTransform</div>
<div class="a" style="left:1689px;top:638px;width:7px;height:7px;border:1px solid #4a4a4a"></div>
<div class="a" style="left:1583px;top:655px;width:40px;height:20px;background:#6e6e6e;border-radius:4px 4px 0 0"></div>
<div class="a" style="left:1625px;top:655px;width:40px;height:20px;background:#3e3e3e;border-radius:4px 4px 0 0"></div>
<div class="a" style="left:1668px;top:655px;width:40px;height:20px;background:#3e3e3e;border-radius:4px 4px 0 0"></div>
<div class="a" style="left:1710px;top:655px;width:40px;height:20px;background:#3e3e3e;border-radius:4px 4px 0 0"></div>
<div class="a" style="left:1752px;top:655px;width:40px;height:20px;background:#3e3e3e;border-radius:4px 4px 0 0"></div>
<div class="a" style="left:1795px;top:655px;width:40px;height:20px;background:#3e3e3e;border-radius:4px 4px 0 0"></div>
<svg style="left:1596px;top:658px" width="15" height="15"><path d="M3.5 11.5 L11.5 3.5 M3 7 L3 12 L8 12 M7.5 3 L12 3 L12 7.5" fill="none" stroke="#e0e0e0" stroke-width="1.5"/></svg>
<svg style="left:1638px;top:658px" width="15" height="15"><path d="M4 5 A5 5 0 1 1 10 13" fill="none" stroke="#e0e0e0" stroke-width="2"/><path d="M1 4 L6 1.5 L6 7Z" fill="#e0e0e0"/></svg>
<svg style="left:1681px;top:658px" width="15" height="15"><rect x="2.5" y="6.5" width="7" height="7" fill="none" stroke="#e0e0e0" stroke-width="1.5"/><path d="M6 10 L13 3 M9 3 L13 3 L13 7" fill="none" stroke="#e0e0e0" stroke-width="1.5"/></svg>
<svg style="left:1723px;top:658px" width="15" height="15"><path d="M1 13 L6 3 L14 3 L9 13Z" fill="#e0e0e0"/></svg>
<svg style="left:1765px;top:658px" width="15" height="15"><circle cx="7.5" cy="7.5" r="5.5" fill="none" stroke="#e0e0e0" stroke-width="1.3"/><circle cx="7.5" cy="7.5" r="2.3" fill="#e0e0e0"/></svg>
<svg style="left:1808px;top:658px" width="15" height="15"><path d="M1.5 2 L1.5 12 L13.5 2 L13.5 12Z" fill="none" stroke="#e0e0e0" stroke-width="1.4"/><path d="M7.5 3 L7.5 8 M5 5 L10 5" stroke="#e0e0e0" stroke-width="1.2"/></svg>
<div class="a" style="left:1583px;top:675px;width:252px;height:80px;background:#6e6e6e;border-radius:0 0 4px 4px"></div>
<div class="t" style="left:1628px;top:689px;">X</div>
<div class="a" style="left:1638px;top:685px;width:71px;height:21px;background:#333;border-radius:4px"></div>
<div class="t" style="left:1643px;top:689px;">0</div>
<div class="a" style="left:1712px;top:691px;width:7px;height:7px;background:none;border:1px solid #404040"></div>
<div class="t" style="left:1734px;top:689px;">Y</div>
<div class="a" style="left:1743px;top:685px;width:72px;height:21px;background:#333;border-radius:4px"></div>
<div class="t" style="left:1748px;top:689px;">0</div>
<div class="a" style="left:1818px;top:691px;width:7px;height:7px;background:none;border:1px solid #404040"></div>
<div class="a" style="left:1628px;top:721px;width:12px;height:12px;background:#5a5a5a;border:1px solid #3a3a3a"></div>
<div class="t" style="left:1644px;top:721px;font-size:11px">Use relative values</div>
<div class="a" style="left:1746px;top:717px;width:51px;height:20px;background:#666;border:1px solid #4a4a4a;border-radius:3px"></div>
<div class="t" style="left:1757px;top:721px;color:#8a8a8a">Apply</div>
<div class="a" style="left:1579px;top:764px;width:260px;height:19px;background:#5b5b5b;border-radius:5px"></div>
<svg style="left:1586px;top:769px" width="8" height="10"><path d="M1 1 L6 5 L1 9Z" fill="none" stroke="#a8a8a8" stroke-width="1.1"/></svg>
<div class="t" style="left:1599px;top:767px;">Miscellaneous</div>
</body></html>
